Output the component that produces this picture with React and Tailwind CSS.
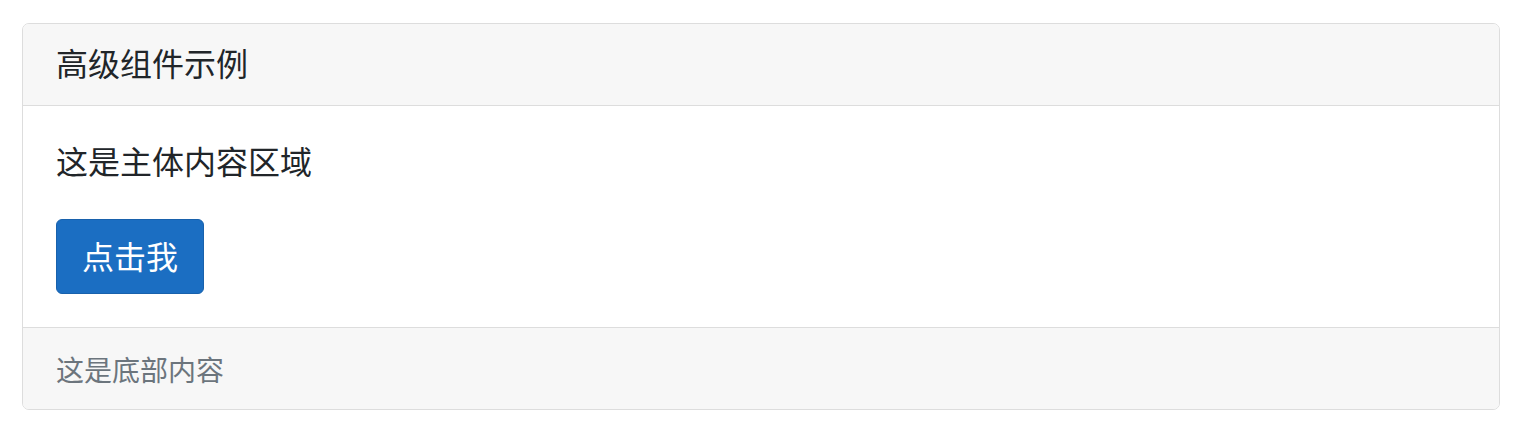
export default function App() {
  return (
    <div className="w-[1514px] h-[428px] bg-white pt-[23px] pl-[22px] font-['Noto_Sans_CJK_SC','Noto_Sans',sans-serif]">
      <div className="w-[1478px] border border-[#dddddd] rounded-[7px] overflow-hidden">
        <div className="h-[82px] flex items-center px-[33px] pb-[5px] bg-[#f7f7f7] border-b border-[#dddddd] text-[32px] text-[#212529]">
          高级组件示例
        </div>
        <div className="px-[33px] pt-[32px] pb-[33px] bg-white">
          <p className="text-[32px] leading-[45px] text-[#212529]">这是主体内容区域</p>
          <button className="mt-[36px] w-[148px] h-[75px] pb-[3px] flex items-center justify-center bg-[#1b6ec2] border border-[#1861ac] rounded-[6px] text-white text-[32px]">
            点击我
          </button>
        </div>
        <div className="h-[82px] flex items-center px-[33px] bg-[#f7f7f7] border-t border-[#dddddd] text-[28px] text-[#6c757d]">
          这是底部内容
        </div>
      </div>
    </div>
  );
}
